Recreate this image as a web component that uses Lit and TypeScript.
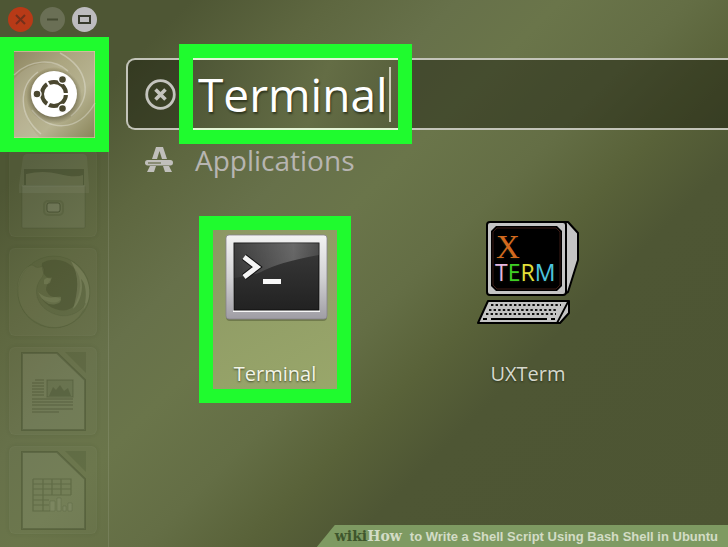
import { LitElement, html, css, svg } from "lit";
import { customElement, state } from "lit/decorators.js";

const page = svg`
  <path d="M13 6H48L76 33V83H13Z" fill="#fff" fill-opacity=".06" stroke="#2c3618" stroke-opacity=".28" stroke-width="2"/>
  <path d="M56 5H77V26Z" fill="#2c3618" fill-opacity=".14"/>`;

const filesIcon = svg`
  <path d="M14 8Q15 5 18 5H74Q77 5 78 8L80 36V44H10V36Z" fill="#fff" fill-opacity=".05"/>
  <path d="M15 20H75V36H15Z" fill="#2c3618" fill-opacity=".32"/>
  <path d="M17 25Q34 21 50 25T74 26V36H17Z" fill="#9aa07a" fill-opacity=".24"/>
  <rect x="13" y="37" width="63" height="42" rx="1" fill="#fff" fill-opacity=".06" stroke="#2c3618" stroke-opacity=".16"/>
  <path d="M13 37H76" stroke="#fff" stroke-opacity=".12"/>
  <rect x="35" y="52" width="19" height="14" rx="4" fill="none" stroke="#2c3618" stroke-opacity=".14" stroke-width="2"/>
  <rect x="38" y="54" width="13" height="9" rx="2" fill="#fff" fill-opacity=".08" stroke="#2c3618" stroke-opacity=".5"/>`;

const firefoxIcon = svg`
  <circle cx="45" cy="44" r="36" fill="#2c3618" fill-opacity=".05" stroke="#2c3618" stroke-opacity=".1"/>
  <path d="M33 15C42 9 58 11 66 21C74 31 72 46 65 58C56 67 40 61 33 51C40 54 48 57 52 51C48 48 42 51 38 44C35 40 40 34 42 31C36 30 32 24 33 15Z" fill="#2c3618" fill-opacity=".24"/>
  <path d="M35 32C38 28 42 31 43 29L41 35Q37 37 35 36ZM29 44C39 53 47 48 52 49Q53 55 47 56Q36 59 29 44Z" fill="#a0a87c" fill-opacity=".24"/>
  <path d="M62 13C79 24 87 45 74 63C79 49 77 35 72 31C75 41 71 55 64 61C69 43 71 29 62 13Z" fill="#c4c99f" fill-opacity=".2"/>
  <path d="M10 31C14 20 22 15 25 18Q28 21 34 18Q37 25 31 32C24 42 27 58 43 65C58 72 71 65 77 55C72 76 48 86 29 75C12 67 5 47 10 31Z" fill="#a5ab82" fill-opacity=".1" stroke="#2c3618" stroke-opacity=".08"/>`;

const writerIcon = svg`${page}
  <path d="M26 33H35M23 36H35M23 39H35M23 42H35M23 45H35M23 48H35M23 52H64M23 55H64M23 58H64M23 62H64M23 65H50" stroke="#2c3618" stroke-opacity=".36" stroke-width="1.2"/>
  <rect x="38" y="33" width="26" height="17" fill="#2c3618" fill-opacity=".1" stroke="#2c3618" stroke-opacity=".28"/>
  <path d="M40 49L44 40L47 43L51 38L55 44L59 41L62 49Z" fill="#2c3618" fill-opacity=".24"/>`;

const calcIcon = svg`${page}
  <path d="M24 33H62V49M24 33V65H41M24 38H62M24 43H62M24 49H62M24 54H40M24 59H40M34 33V65M43 33V49M52 33V49" fill="none" stroke="#2c3618" stroke-opacity=".26" stroke-width="1.2"/>
  <path d="M41 55H46V65H41ZM48 52H52V65H48ZM54 60H57V65H54ZM59 57H63V65H59Z" fill="#fff" fill-opacity=".06" stroke="#2c3618" stroke-opacity=".15"/>`;

const terminalIcon = svg`
  <defs>
    <linearGradient id="bezel" x2="0" y2="1"><stop offset="0" stop-color="#f3f3f3"/><stop offset=".5" stop-color="#d2d2d4"/><stop offset="1" stop-color="#9f9da4"/></linearGradient>
    <linearGradient id="glass" x2="0" y2="1"><stop offset="0" stop-color="#3a3a3a"/><stop offset="1" stop-color="#222"/></linearGradient>
    <linearGradient id="shine" x2="1" y2="0"><stop offset="0" stop-color="#fff" stop-opacity=".04"/><stop offset=".7" stop-color="#fff" stop-opacity=".24"/><stop offset="1" stop-color="#fff" stop-opacity=".1"/></linearGradient>
  </defs>
  <rect x="3" y="17" width="101" height="84" rx="4" fill="#3c4422" fill-opacity=".4"/>
  <rect x="3" y="15" width="101" height="84" rx="3" fill="url(#bezel)" stroke="#85828a" stroke-width=".8"/>
  <rect x="10" y="22" width="87" height="70" fill="#f8f8f8"/>
  <rect x="11" y="23" width="85" height="67" fill="url(#glass)" stroke="#111"/>
  <path d="M11 23H96V35Q56 42 38 52Q26 57 11 58Z" fill="url(#shine)"/>
  <path d="M21 37L34 47L21 57" fill="none" stroke="#111" stroke-width="7"/>
  <path d="M21 37L34 47L21 57" fill="none" stroke="#f5f5f5" stroke-width="5"/>
  <rect x="40" y="59" width="18" height="5" fill="#f8f8f8"/>`;

const uxtermIcon = svg`
  <path d="M88 2L92 2L102 13V40L92 72L88 74Z" fill="#c4c4c4" stroke="#000" stroke-width="2" stroke-linejoin="round"/>
  <rect x="11" y="2" width="79" height="73" rx="3" fill="#c4c4c4" stroke="#000" stroke-width="2"/>
  <path d="M20 6H81L86 11V66L81 71H20L15 66V11Z" fill="#000"/>
  <path d="M21 8H80L84 12V65L80 69H21L17 65V12Z" fill="none" stroke="#3a1b14"/>
  <text x="20" y="38" font-family="Liberation Serif, serif" font-size="33" fill="#d2691e">X</text>
  <text x="19" y="61" font-family="Open Sans, sans-serif" font-size="23"><tspan fill="#e6b8e0">T</tspan><tspan fill="#3fd024">E</tspan><tspan fill="#e3e03a">R</tspan><tspan fill="#4cc6e0">M</tspan></text>
  <path d="M12 81H93V93L84 103H2Z" fill="#c4c4c4" stroke="#000" stroke-width="2" stroke-linejoin="round"/>
  <path d="M15 85H85M13 90H82M10 94H80" stroke="#111" stroke-width="2.200" stroke-dasharray="2.400 2.200"/>
  <path d="M92 82L81 103M7 99H11M15 99H71M75 99H79" fill="none" stroke="#000" stroke-width="1.800"/>`;

const dashIcon = svg`
  <defs>
    <linearGradient id="dash" x2="1" y2="1"><stop offset="0" stop-color="#8f8763"/><stop offset=".35" stop-color="#aba580"/><stop offset=".65" stop-color="#b7b391"/><stop offset="1" stop-color="#898459"/></linearGradient>
    <radialGradient id="halo"><stop offset=".65" stop-color="#4b462c" stop-opacity=".75"/><stop offset="1" stop-color="#4b462c" stop-opacity="0"/></radialGradient>
  </defs>
  <rect width="81" height="87" fill="url(#dash)"/>
  <path d="M0 28C22 2 60 10 64 39C60 14 35 12 24 22C6 33 4 64 26 87H0Z" fill="#fff" fill-opacity=".1"/>
  <path d="M0 24C16 8 40 7 54 20M46 2C74 17 80 46 57 65M81 52C64 82 34 80 18 59M27 83C4 64 4 35 24 21" fill="none" stroke="#fff" stroke-opacity=".3" stroke-width="1.500"/>
  <circle cx="40" cy="45" r="28" fill="url(#halo)"/>
  <circle cx="40" cy="43" r="23" fill="#fff"/>
  <circle cx="40" cy="43" r="12" fill="none" stroke="#4a472f" stroke-width="4"/>
  <path d="M40 43L58 43M40 43L31 27.400M40 43L31 58.600" stroke="#fff" stroke-width="2.200"/>
  <g fill="#4a472f" stroke="#fff" stroke-width="1.400"><circle cx="23" cy="43" r="4"/><circle cx="48.500" cy="28.500" r="4"/><circle cx="48.500" cy="57.500" r="4"/></g>
  <path d="M0 .5H81M80.500 0V87M0 86.500H81" stroke="#d9c9a2" stroke-opacity=".7"/>`;

@customElement("app-root")
export class AppRoot extends LitElement {
  @state() private query = "Terminal";

  private launchers = [
    { name: "Files", icon: filesIcon },
    { name: "Firefox", icon: firefoxIcon },
    { name: "Writer", icon: writerIcon },
    { name: "Calc", icon: calcIcon },
  ];

  private apps = [
    { name: "Terminal", icon: terminalIcon, selected: true },
    { name: "UXTerm", icon: uxtermIcon, selected: false },
  ];

  static styles = css`
    :host {
      --mark: #1ffb2e;
      display: block;
      position: relative;
      box-sizing: border-box;
      min-height: 100vh;
      overflow: hidden;
      font-family: "Open Sans", "Noto Sans", sans-serif;
      background: linear-gradient(135deg, #4e5634 0%, #4e5634 15%, #5e6740 26%, #67714a 36%, #6a754a 44%, #646e45 54%, #596239 62%, #4e5634 70%, #4d5533 100%);
    }
    * { box-sizing: border-box; }
    button { padding: 0; border: 0; background: none; font: inherit; color: inherit; }
    svg { display: block; overflow: visible; }
    .controls { display: flex; gap: 7px; height: 37px; padding: 7px 8px; }
    .control { width: 25px; height: 25px; border-radius: 50%; }
    .close { background: #b83a17; }
    .minimize { background: #6a6f55; }
    .restore { background: #bdbcbf; }
    .body { display: grid; grid-template-columns: 109px 1fr; }
    .launcher { min-height: calc(100vh - 37px); box-shadow: inset -1px 0 rgba(255, 255, 255, 0.1); }
    .dash { display: block; position: relative; border: 14px solid var(--mark); }
    .tiles { display: grid; gap: 11px; margin: -3px 11px 0 9px; padding: 0; list-style: none; }
    .tile { display: block; width: 88px; height: 88px; border-radius: 6px; background: rgba(255, 255, 255, 0.02); box-shadow: inset 0 0 2px rgba(255, 255, 255, 0.08), 0 0 4px rgba(40, 50, 20, 0.1); }
    main { padding: 21px 0 0 17px; min-width: 0; }
    .search { display: flex; align-items: center; height: 72px; padding-left: 17px; border: 2px solid #c3c4b9; border-right: 0; border-radius: 9px 0 0 9px; background: rgba(20, 22, 10, 0.42); }
    .field { display: flex; align-items: center; width: 205px; height: 72px; margin-left: 17px; padding-left: 5px; border: solid #e3f5d5; border-width: 2px 0; outline: 14px solid var(--mark); background: linear-gradient(110deg, #4e5636, #646d45 60%, #565e3b); }
    .query { width: 191px; height: 64px; padding: 0; border: 0; outline: 0; background: none; color: #fff; font: 46px "Open Sans", sans-serif; text-shadow: 1px 2px 2px rgba(20, 25, 10, 0.6); }
    .caret { width: 2px; height: 55px; background: #c9ccb8; }
    .heading { display: flex; align-items: center; gap: 21px; height: 60px; margin: 0; padding-left: 19px; font-size: 28px; font-weight: 400; color: #b7b5b1; }
    .results { display: flex; gap: 101px; margin: 26px 0 0; padding: 0 0 0 73px; list-style: none; }
    .app { display: flex; flex-direction: column; align-items: center; gap: 36px; width: 152px; height: 187px; padding-top: 4px; font-size: 20px; line-height: 28px; color: #d6d8cd; text-shadow: 0 1px 2px rgba(30, 35, 15, 0.7); }
    .selected { color: #f3f5e8; background: linear-gradient(150deg, #8b9663, #9aa86b); box-shadow: inset 0 0 0 14px var(--mark); }
    .banner { display: flex; align-items: center; position: absolute; right: 0; bottom: 0; height: 22px; padding: 0 10px 0 18px; white-space: nowrap; background: #7e9a62; clip-path: polygon(18px 0, 100% 0, 100% 100%, 0 100%); color: #d3dcc6; font: bold 13px "Liberation Sans", sans-serif; }
    .brand { font: bold 14px "DejaVu Serif", serif; margin-right: 8px; }
    .wiki { color: #3f562d; }
  `;

  private onInput(e: Event) {
    this.query = (e.target as HTMLInputElement).value;
  }

  render() {
    return html`
      <header class="controls">
        <button class="control close" aria-label="Close"><svg width="25" height="25"><path d="M8 8L17 17M17 8L8 17" stroke="#74301a" stroke-width="2"/></svg></button>
        <button class="control minimize" aria-label="Minimize"><svg width="25" height="25"><path d="M7 12.500H18" stroke="#454b32" stroke-width="2"/></svg></button>
        <button class="control restore" aria-label="Restore"><svg width="25" height="25"><rect x="7" y="9" width="11" height="7" fill="none" stroke="#373a2d" stroke-width="2"/></svg></button>
      </header>
      <div class="body">
        <nav class="launcher" aria-label="Launcher">
          <button class="dash" aria-label="Search your computer"><svg width="81" height="87">${dashIcon}</svg></button>
          <ul class="tiles">
            ${this.launchers.map((l) => html`<li><button class="tile" aria-label=${l.name}><svg width="88" height="88">${l.icon}</svg></button></li>`)}
          </ul>
        </nav>
        <main>
          <div class="search">
            <button aria-label="Clear search" @click=${() => (this.query = "")}>
              <svg width="31" height="31"><g fill="none" stroke="#c4c4be"><circle cx="15.500" cy="15.500" r="13.800" stroke-width="2.800"/><path d="M10.500 10.500L20.500 20.500M20.500 10.500L10.500 20.500" stroke-width="3.600"/></g></svg>
            </button>
            <div class="field">
              <input class="query" type="text" aria-label="Search" spellcheck="false" .value=${this.query} @input=${this.onInput}>
              <span class="caret"></span>
            </div>
          </div>
          <h2 class="heading">
            <svg width="29" height="26"><g fill="#c0bfbb"><path d="M11 0H18L22 12H17L14.500 4L12 12H7ZM5 19H11L9 25H2ZM18 19H24L27 25H20Z"/><rect y="13" width="28" height="5.500" rx="2.700"/></g><path d="M3 16H16" stroke="#6b724f" stroke-width="1.300"/></svg>
            Applications
          </h2>
          <ul class="results">
            ${this.apps.map((a) => html`<li><button class="app ${a.selected ? "selected" : ""}"><svg width="104" height="104" aria-hidden="true">${a.icon}</svg><span>${a.name}</span></button></li>`)}
          </ul>
        </main>
      </div>
      <footer class="banner"><span class="brand"><span class="wiki">wiki</span>How</span><span>to Write a Shell Script Using Bash Shell in Ubuntu</span></footer>
    `;
  }
}
